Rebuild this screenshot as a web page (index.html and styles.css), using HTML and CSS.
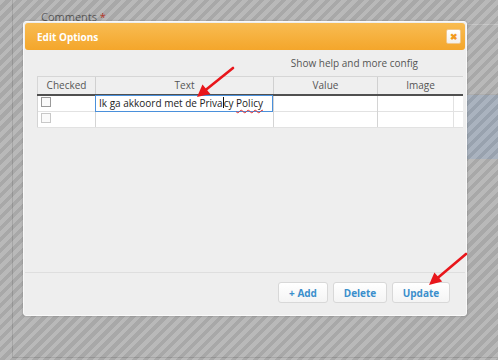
FILE: index.html
```html
<!DOCTYPE html>
<html lang="en">
<head>
    <meta charset="UTF-8">
    <title>Edit Options</title>
    <link rel="stylesheet" href="styles.css">
</head>
<body>
<div class="page">
    <div class="label">Comments <span class="req">*</span></div>
    <div class="field"></div>
    <div class="field-sel"></div>
</div>
<div class="overlay"></div>

<div class="dialog">
    <div class="dialog-head">
        <span class="dialog-title">Edit Options</span>
        <span class="close">&#x2716;</span>
    </div>
    <div class="help">Show help and more config</div>
    <div class="grid">
        <div class="grid-head">
            <div class="th">Checked</div>
            <div class="th">Text</div>
            <div class="th">Value</div>
            <div class="th">Image</div>
        </div>
        <div class="grid-row">
            <div class="td"><span class="chk"></span></div>
            <div class="td edit">Ik ga akkoord met de Priva<span class="caret"></span>cy <span class="typo">Policy</span></div>
            <div class="td"></div>
            <div class="td"></div>
        </div>
        <div class="grid-row">
            <div class="td"><span class="chk light"></span></div>
            <div class="td"></div>
            <div class="td"></div>
            <div class="td"></div>
        </div>
    </div>
    <div class="foot">
        <button class="btn">+ Add</button>
        <button class="btn">Delete</button>
        <button class="btn">Update</button>
    </div>
</div>

<!-- annotatie pijlen -->
<svg class="marks" width="498" height="360" viewBox="0 0 498 360">
    <line x1="233" y1="68" x2="205" y2="90.5" stroke="#e8161b" stroke-width="2.6" stroke-linecap="round"/>
    <polygon points="197,97 210.3,93.9 202.5,84.6" fill="#e8161b"/>
    <line x1="466" y1="254" x2="437" y2="278.5" stroke="#e8161b" stroke-width="2.6" stroke-linecap="round"/>
    <polygon points="429,285 442.2,281.6 434.4,272.6" fill="#e8161b"/>
</svg>
</body>
</html>
```
FILE: styles.css
```css
*{
    box-sizing: border-box;
}
body{
    margin: 0;
    width: 498px;
    height: 360px;
    overflow: hidden;
    position: relative;
    background-color: #b2b2b2;
    font-family: "Open Sans", "Noto Sans", sans-serif;
}
.page{
    margin-left: 12px;
    height: 358px;
    border-left: 1px solid #9d9d9d;
    border-bottom: 1px solid #9d9d9d;
    padding: 10px 0 0 28px;
}
.label{
    font-size: 11px;
    line-height: 14px;
    color: #555;
}
.req{
    color: #c0392b;
}
.field{
    height: 71px;
    border-top: 1px solid #c2c2c2;
    border-bottom: 1px solid #a6a6a6;
}
.field-sel{
    height: 64px;
    background-color: #a2acb9;
}
.overlay{
    position: absolute;
    left: 0;
    top: 0;
    width: 100%;
    height: 100%;
    background: repeating-linear-gradient(135deg, rgba(255,255,255,0.09) 0 4px, rgba(0,0,0,0.06) 4px 7.8px);
}
.dialog{
    position: absolute;
    left: 23px;
    top: 21px;
    width: 444px;
    height: 295px;
    background-color: #eeeeee;
    border: 1px solid #f9f9f9;
    border-radius: 3px;
    display: flex;
    flex-direction: column;
    box-shadow: 0 0 2px rgba(0,0,0,0.25);
}
.dialog-head{
    margin: 1px 1px 0;
    height: 27px;
    border-radius: 3px;
    background: linear-gradient(#f8bc52, #f4a62b);
    display: flex;
    align-items: center;
    justify-content: space-between;
    padding: 0 4px 0 12px;
}
.dialog-title{
    color: #fff;
    font-weight: bold;
    font-size: 10px;
}
.close{
    width: 15px;
    height: 15px;
    border-radius: 2px;
    background: linear-gradient(#ffffff, #f3f0ea);
    border: 1px solid #f1c78a;
    color: #f29a1d;
    font-size: 9px;
    font-weight: bold;
    line-height: 13px;
    text-align: center;
}
.help{
    height: 26px;
    display: flex;
    align-items: center;
    justify-content: flex-end;
    padding: 0 48px 1px 0;
    font-size: 10px;
    color: #555;
}
.grid{
    margin-left: 13px;
    width: 426px;
    font-size: 10px;
}
.grid-head{
    display: grid;
    grid-template-columns: 58px 178px 104px 86px;
    height: 20px;
    border-top: 1px solid #d6d6d6;
    border-bottom: 2px solid #505050;
    background-color: #efefef;
}
.th{
    text-align: center;
    line-height: 16px;
    color: #555;
    border-left: 1px solid #d0d0d0;
}
.th:first-child{
    border-left: 1px solid #d6d6d6;
}
.grid-row{
    display: grid;
    grid-template-columns: 58px 178px 104px 77px;
    height: 16px;
    background-color: #fff;
    border-bottom: 1px solid #e2e2e2;
}
.td{
    border-left: 1px solid #d4d4d4;
    position: relative;
}
.td:last-child{
    border-right: 1px solid #e2e2e2;
}
.chk{
    display: block;
    width: 10px;
    height: 10px;
    margin: 1px 0 0 3px;
    border: 1px solid #9a9a9a;
    background-color: #fafafa;
}
.chk.light{
    border-color: #c8c8c8;
}
.edit{
    border: 1px solid #4a90db;
    margin-top: -1px;
    height: 17px;
    padding-left: 3px;
    line-height: 15px;
    color: #222;
    white-space: nowrap;
}
.caret{
    display: inline-block;
    width: 1px;
    height: 11px;
    background-color: #111;
    vertical-align: -1px;
}
.typo{
    text-decoration: underline wavy #e03030;
    text-decoration-thickness: 1px;
    text-underline-offset: 2px;
}
.foot{
    margin: auto 1px 0;
    height: 43px;
    border-top: 1px solid #dedede;
    display: flex;
    justify-content: flex-end;
    align-items: flex-start;
    gap: 5px;
    padding: 9px 15px 0 0;
}
.btn{
    height: 21px;
    padding: 0;
    border: 1px solid #d8d8d8;
    border-radius: 3px;
    background: linear-gradient(#ffffff, #f4f4f4);
    color: #3b8fcc;
    font-family: "Open Sans", "Noto Sans", sans-serif;
    font-weight: bold;
    font-size: 10px;
    width: 50px;
}
.btn:nth-child(2){
    width: 54px;
}
.btn:nth-child(3){
    width: 58px;
}
.marks{
    position: absolute;
    left: 0;
    top: 0;
}
```
